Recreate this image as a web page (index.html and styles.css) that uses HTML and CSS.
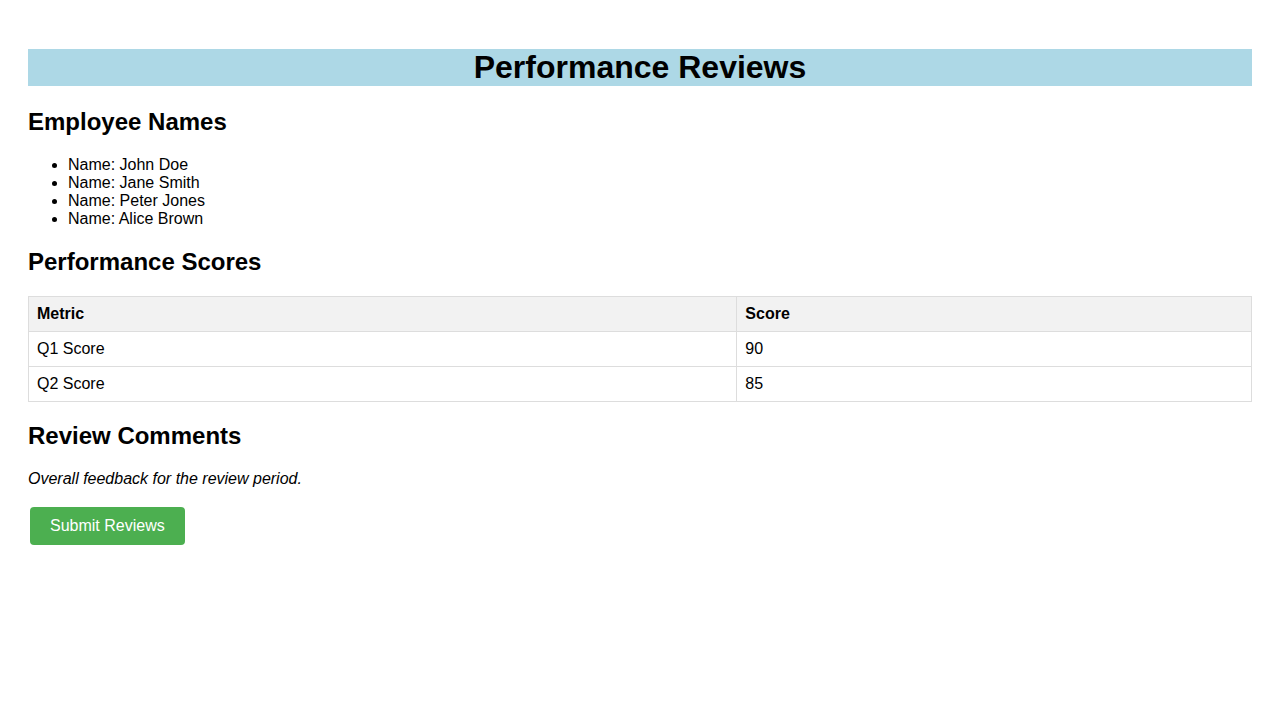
FILE: index.html
```html
<!DOCTYPE html>
<html lang="en">
<head>
<meta charset="utf-8">
<title>Performance Reviews</title>
<link rel="stylesheet" href="styles.css">
</head>
<body>
<h1 class="page-title">Performance Reviews</h1>
<h2 class="section-title">Employee Names</h2>
<ul class="names">
  <li>Name: John Doe</li>
  <li>Name: Jane Smith</li>
  <li>Name: Peter Jones</li>
  <li>Name: Alice Brown</li>
</ul>
<h2 class="section-title">Performance Scores</h2>
<table class="scores">
  <thead>
    <tr><th>Metric</th><th>Score</th></tr>
  </thead>
  <tbody>
    <tr><td>Q1 Score</td><td>90</td></tr>
    <tr><td>Q2 Score</td><td>85</td></tr>
  </tbody>
</table>
<h2 class="section-title">Review Comments</h2>
<p class="comments">Overall feedback for the review period.</p>
<button class="submit-btn" type="button">Submit Reviews</button>
</body>
</html>
```
FILE: styles.css
```css
body {
  font-family: "Liberation Sans", Arial, sans-serif;
  padding: 20px;
  margin: 8px;
  color: #000;
  background: #fff;
}
.page-title {
  background-color: #add8e6;
  text-align: center;
  font-size: 32px;
  margin: 21.44px 0;
}
.section-title {
  font-size: 24px;
  margin: 19.92px 0;
}
.names {
  margin: 16px 0;
  padding-left: 40px;
}
.scores {
  width: 100%;
  border-collapse: collapse;
  margin-top: 20px;
}
.scores th,
.scores td {
  border: 1px solid #ddd;
  padding: 8px;
  text-align: left;
}
.scores th {
  background-color: #f2f2f2;
}
.comments {
  font-style: italic;
  margin: 16px 0;
}
.submit-btn {
  background-color: #4caf50;
  color: #fff;
  border: none;
  border-radius: 4px;
  padding: 10px 20px;
  font-family: "Liberation Sans", Arial, sans-serif;
  font-size: 16px;
  margin: 3px 2px 0;
  cursor: pointer;
}
```
